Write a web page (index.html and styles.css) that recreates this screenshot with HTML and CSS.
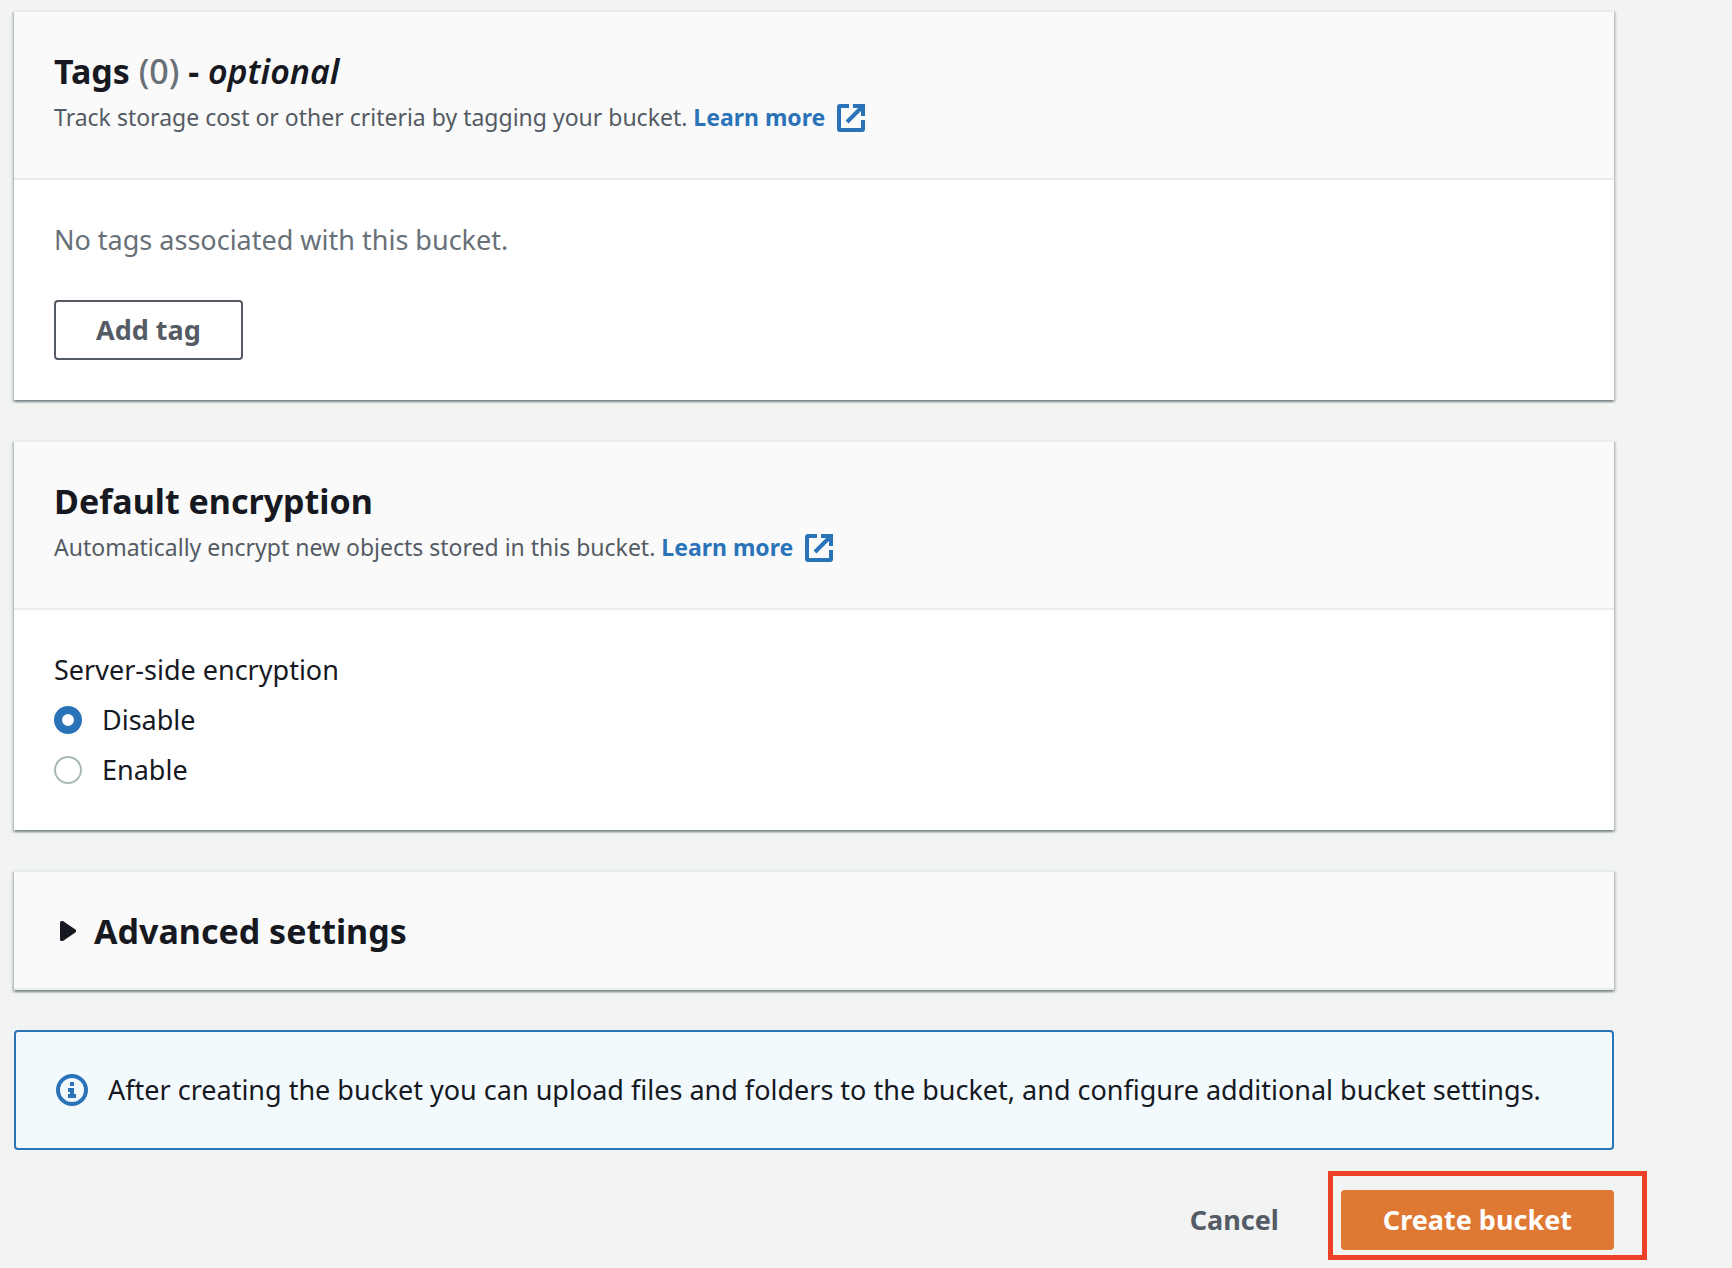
FILE: index.html
```html
<!DOCTYPE html>
<html lang="en">
<head>
<meta charset="utf-8">
<title>Create bucket</title>
<link rel="stylesheet" href="styles.css">
</head>
<body>
<form class="page">
  <section class="card">
    <header class="card-header">
      <h2 class="title">Tags <span class="count">(0)</span> - <em class="optional">optional</em></h2>
      <p class="description">Track storage cost or other criteria by tagging your bucket. <a class="link" href="#tags-help">Learn more<svg class="external" viewBox="0 0 28 28" aria-hidden="true"><path d="M12 2H3a1 1 0 0 0-1 1v22a1 1 0 0 0 1 1h22a1 1 0 0 0 1-1v-9M16 2h10v10M26 2L10 18"/></svg></a></p>
    </header>
    <div class="card-body tags-body">
      <p class="empty">No tags associated with this bucket.</p>
      <button class="button" type="button">Add tag</button>
    </div>
  </section>

  <section class="card">
    <header class="card-header">
      <h2 class="title">Default encryption</h2>
      <p class="description">Automatically encrypt new objects stored in this bucket. <a class="link" href="#encryption-help">Learn more<svg class="external" viewBox="0 0 28 28" aria-hidden="true"><path d="M12 2H3a1 1 0 0 0-1 1v22a1 1 0 0 0 1 1h22a1 1 0 0 0 1-1v-9M16 2h10v10M26 2L10 18"/></svg></a></p>
    </header>
    <fieldset class="card-body options">
      <legend class="legend">Server-side encryption</legend>
      <label class="option"><input class="radio" type="radio" name="encryption" value="disable" checked>Disable</label>
      <label class="option"><input class="radio" type="radio" name="encryption" value="enable">Enable</label>
    </fieldset>
  </section>

  <section class="card">
    <h2 class="title expander">
      <button class="toggle" type="button" aria-expanded="false"><svg class="caret" viewBox="0 0 16 20" aria-hidden="true"><path d="M0 1.5Q0 0 1.5 0H3L16 9v2L3 20H1.5Q0 20 0 18.500z"/></svg>Advanced settings</button>
    </h2>
  </section>

  <div class="alert" role="status">
    <svg class="info" viewBox="0 0 32 32" aria-hidden="true"><circle cx="16" cy="16" r="14"/><path d="M14 8h4v4h-4zM12 14h6v6h2v4h-8v-4h2v-2h-2z"/></svg>
    <p class="alert-text">After creating the bucket you can upload files and folders to the bucket, and configure additional bucket settings.</p>
  </div>

  <footer class="actions">
    <button class="button plain" type="button">Cancel</button>
    <div class="highlight"><button class="button primary" type="submit">Create bucket</button></div>
  </footer>
</form>
</body>
</html>
```
FILE: styles.css
```css
* {
  box-sizing: border-box;
}

body {
  margin: 0;
  background: #f2f3f3;
  color: #16191f;
  font-family: "Noto Sans", "Open Sans", sans-serif;
  font-size: 27px;
  line-height: 40px;
}

h2,
p {
  margin: 0;
}

.page {
  display: flex;
  flex-direction: column;
  gap: 40px;
  padding: 10px 118px 18px 14px;
}

.card {
  background: #fff;
  border-top: 2px solid #eaeded;
  box-shadow: 0 2px 2px 0 rgba(0, 28, 36, 0.3), 2px 2px 2px 0 rgba(0, 28, 36, 0.15), -2px 2px 2px 0 rgba(0, 28, 36, 0.15);
}

.card-header {
  padding: 38px 40px 36px;
  background: #fafafa;
  border-bottom: 2px solid #ebebeb;
}

.title {
  font-size: 34px;
  font-weight: 700;
  line-height: 42px;
}

.count {
  color: #687078;
  font-weight: 500;
}

.optional {
  font-weight: 600;
}

.description {
  color: #545b64;
  font-size: 23px;
  line-height: 50px;
}

.link {
  color: #2a73b8;
  font-weight: 700;
  text-decoration: none;
}

.external {
  width: 28px;
  height: 28px;
  margin-left: 12px;
  vertical-align: -6px;
  fill: none;
  stroke: currentColor;
  stroke-width: 4;
}

.card-body {
  padding: 40px;
}

.tags-body {
  display: flex;
  flex-direction: column;
  align-items: flex-start;
  gap: 40px;
}

.empty {
  color: #687078;
}

.button {
  height: 60px;
  padding: 0 40px;
  border: 2px solid #545b64;
  border-radius: 4px;
  background: #fff;
  color: #545b64;
  font-family: inherit;
  font-size: 27px;
  font-weight: 700;
  line-height: 36px;
}

.options {
  display: flex;
  flex-direction: column;
  gap: 10px;
  margin: 0;
  border: 0;
}

.legend {
  float: left;
  padding: 0;
}

.option {
  display: flex;
  align-items: center;
  gap: 20px;
}

.radio {
  appearance: none;
  width: 28px;
  height: 28px;
  margin: 0;
  border: 2px solid #aab7b8;
  border-radius: 50%;
  background: #fff;
}

.radio:checked {
  border: 8px solid #2a73b8;
}

.expander {
  padding: 38px 40px 36px;
  background: #fafafa;
  border-bottom: 2px solid #ebebeb;
}

.toggle {
  display: flex;
  align-items: center;
  gap: 18px;
  padding: 0 0 0 6px;
  border: 0;
  background: none;
  color: inherit;
  font: inherit;
}

.caret {
  width: 16px;
  height: 20px;
  fill: currentColor;
}

.alert {
  display: flex;
  align-items: center;
  gap: 20px;
  padding: 38px 40px;
  border: 2px solid #2a73b8;
  border-radius: 4px;
  background: #f2fafd;
}

.info {
  flex: none;
  width: 32px;
  height: 32px;
  fill: none;
  stroke: #2a73b8;
  stroke-width: 4;
}

.info path {
  fill: #2a73b8;
  stroke: none;
}

.actions {
  display: flex;
  justify-content: flex-end;
  gap: 20px;
}

.plain {
  border-color: transparent;
  background: transparent;
}

.highlight {
  position: relative;
}

/* Callout frame drawn around the submit button */
.highlight::after {
  content: "";
  position: absolute;
  inset: -19px -33px -10px -13px;
  border: 5px solid #ec4127;
  pointer-events: none;
}

.primary {
  border-color: #df7832;
  background: #df7832;
  color: #fff;
}
```
